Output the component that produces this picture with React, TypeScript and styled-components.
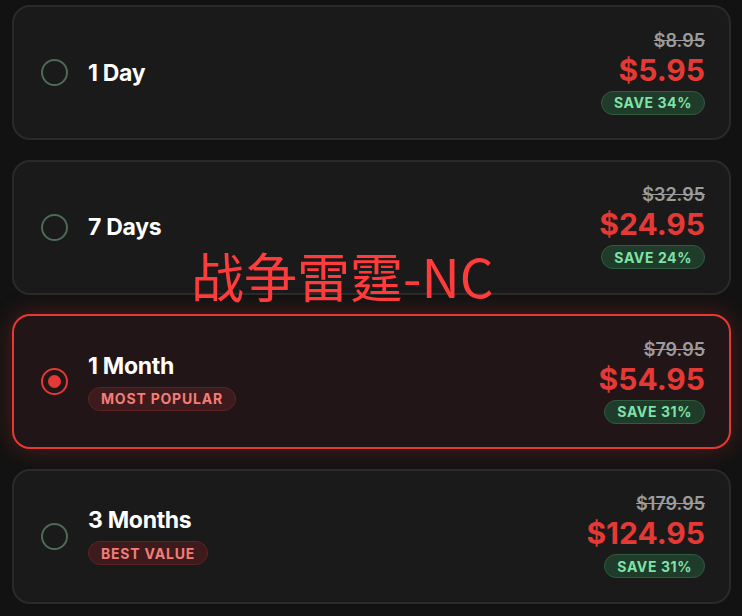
import styled, { createGlobalStyle } from "styled-components";

const GlobalStyle = createGlobalStyle`
  html, body {
    margin: 0;
    padding: 0;
    background: #121212;
  }
  body {
    font-family: Inter, "Noto Sans", sans-serif;
  }
`;

type Plan = {
  id: string;
  name: string;
  oldPrice: string;
  price: string;
  save: string;
  tag?: string;
};

const plans: Plan[] = [
  { id: "1d", name: "1 Day", oldPrice: "$8.95", price: "$5.95", save: "SAVE 34%" },
  { id: "7d", name: "7 Days", oldPrice: "$32.95", price: "$24.95", save: "SAVE 24%" },
  { id: "1m", name: "1 Month", oldPrice: "$79.95", price: "$54.95", save: "SAVE 31%", tag: "MOST POPULAR" },
  { id: "3m", name: "3 Months", oldPrice: "$179.95", price: "$124.95", save: "SAVE 31%", tag: "BEST VALUE" },
];

export default function App() {
  const selected = "1m";
  return (
    <>
      <GlobalStyle />
      <Page>
        <List>
          {plans.map((p) => {
            const active = p.id === selected;
            return (
              <Card key={p.id} $active={active}>
                <Radio $active={active} />
                <Info>
                  <Name>{p.name}</Name>
                  {p.tag && <Tag>{p.tag}</Tag>}
                </Info>
                <Prices>
                  <OldPrice>{p.oldPrice}</OldPrice>
                  <Price>{p.price}</Price>
                  <Save>{p.save}</Save>
                </Prices>
              </Card>
            );
          })}
        </List>
        <Watermark>战争雷霆-NC</Watermark>
      </Page>
    </>
  );
}

const Page = styled.div`
  position: relative;
  width: 742px;
  height: 616px;
  padding: 5px 11px 0 12px;
  box-sizing: border-box;
  overflow: hidden;
`;

const List = styled.div`
  display: flex;
  flex-direction: column;
  gap: 19.5px;
`;

const Card = styled.div<{ $active: boolean }>`
  display: flex;
  align-items: center;
  box-sizing: border-box;
  height: 135px;
  padding: 0 24px 0 27px;
  border-radius: 18px;
  border: ${(p) => (p.$active ? "2px solid #e53935" : "2px solid #2a2a2a")};
  background: ${(p) => (p.$active ? "#221517" : "#1a1a1a")};
  box-shadow: ${(p) => (p.$active ? "0 0 24px rgba(229, 57, 53, 0.3)" : "none")};
`;

const Radio = styled.span<{ $active: boolean }>`
  position: relative;
  flex: none;
  width: 27px;
  height: 27px;
  box-sizing: border-box;
  border-radius: 50%;
  border: 2px solid ${(p) => (p.$active ? "#e53935" : "#4e6b58")};
  &::after {
    content: "";
    display: ${(p) => (p.$active ? "block" : "none")};
    position: absolute;
    inset: 5px;
    border-radius: 50%;
    background: #e53935;
  }
`;

const Info = styled.div`
  display: flex;
  flex-direction: column;
  align-items: flex-start;
  gap: 8px;
  margin-left: 20px;
  flex: 1;
`;

const Name = styled.div`
  color: #ffffff;
  font-size: 23px;
  font-weight: 700;
  line-height: 26px;
  letter-spacing: -0.3px;
`;

const Tag = styled.span`
  display: inline-flex;
  align-items: center;
  height: 24px;
  box-sizing: border-box;
  padding: 0 12px;
  border-radius: 12px;
  border: 1px solid #5e2225;
  background: #3d1a1c;
  color: #f47d78;
  font-size: 14px;
  font-weight: 700;
  letter-spacing: 0.8px;
`;

const Prices = styled.div`
  display: flex;
  flex-direction: column;
  align-items: flex-end;
`;

const OldPrice = styled.div`
  color: #9c9c9c;
  font-size: 18px;
  font-weight: 600;
  line-height: 20px;
  text-decoration: line-through;
`;

const Price = styled.div`
  color: #e53935;
  font-size: 30px;
  font-weight: 700;
  line-height: 34px;
  margin-top: 2px;
`;

const Save = styled.span`
  display: inline-flex;
  align-items: center;
  height: 24px;
  box-sizing: border-box;
  margin-top: 4px;
  padding: 0 12px;
  border-radius: 12px;
  border: 1px solid #2f5c3f;
  background: #1f3b2a;
  color: #7ee3a6;
  font-size: 14px;
  font-weight: 700;
  letter-spacing: 0.6px;
`;

const Watermark = styled.div`
  position: absolute;
  left: 191px;
  top: 244px;
  color: #ff3b3b;
  font-family: "Noto Sans CJK SC", "Noto Sans", sans-serif;
  font-size: 53px;
  line-height: 62px;
  pointer-events: none;
  white-space: nowrap;
`;
